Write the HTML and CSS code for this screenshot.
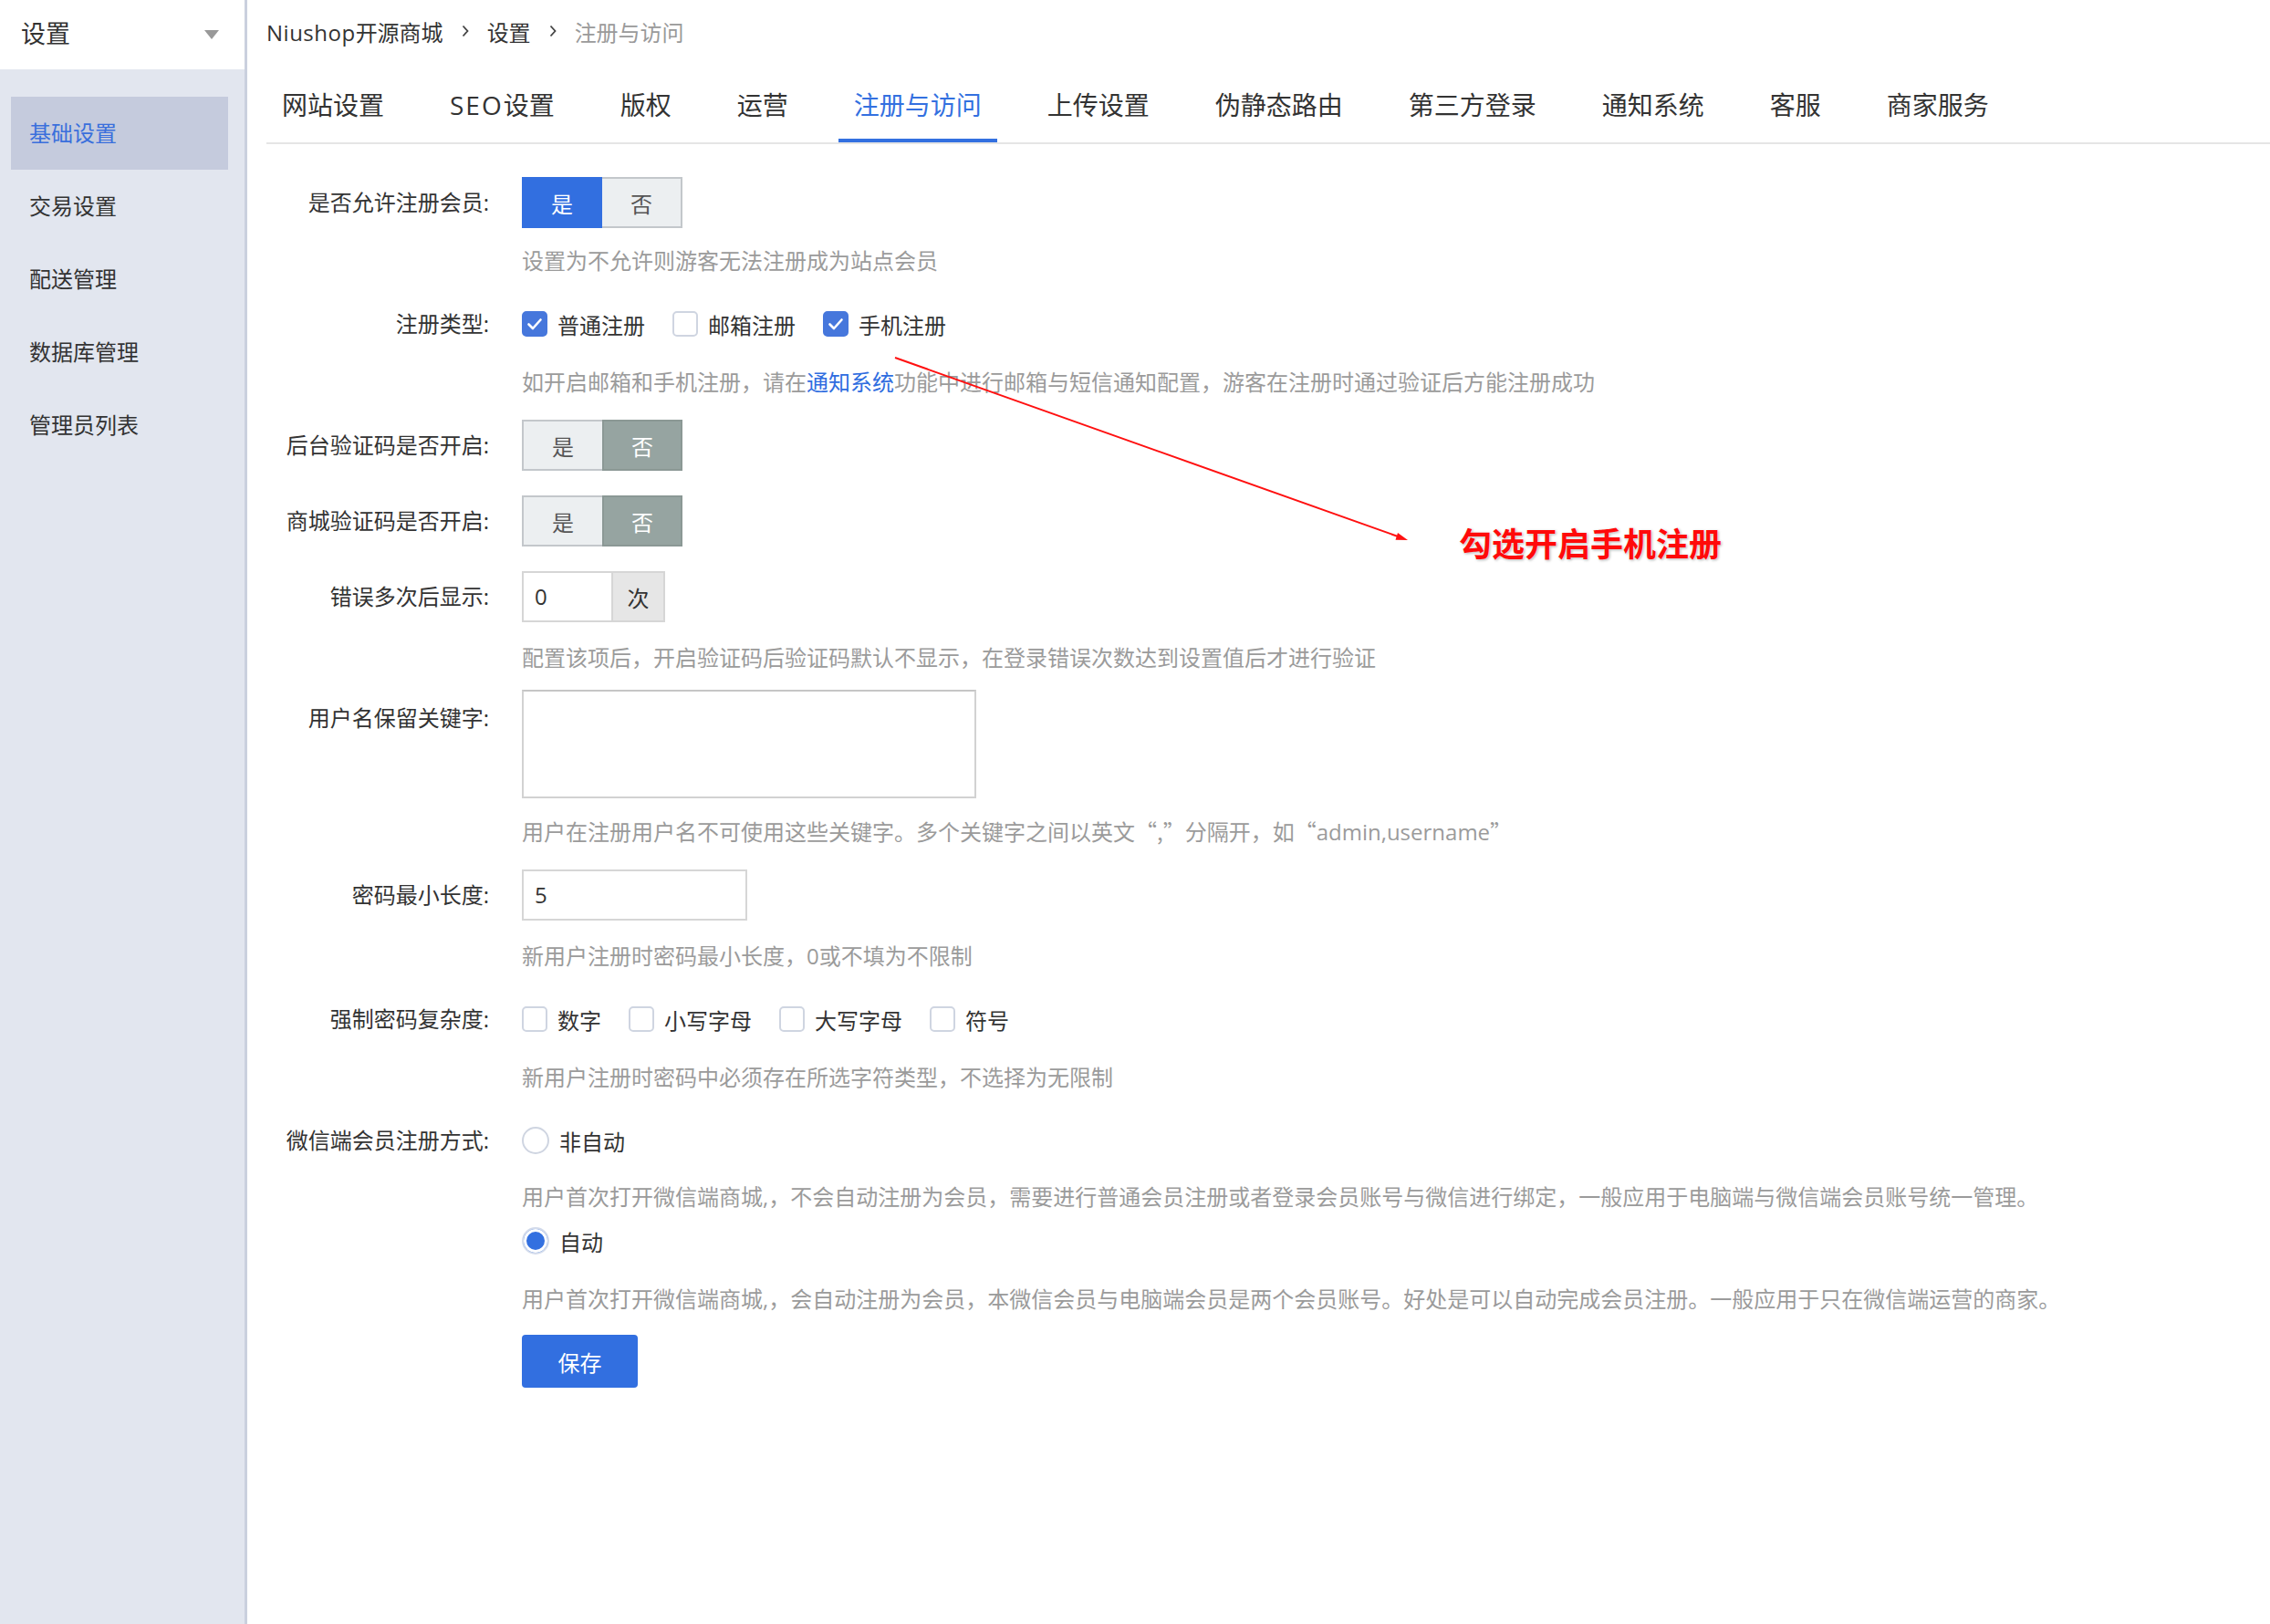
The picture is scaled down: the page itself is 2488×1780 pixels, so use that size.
FILE: index.html
```html
<!DOCTYPE html>
<html lang="zh-CN">
<head>
<meta charset="utf-8">
<title>注册与访问</title>
<link rel="stylesheet" href="styles.css">
</head>
<body>
<div class="page">
  <aside class="sidebar">
    <div class="side-head">
      <span class="side-title">设置</span>
      <span class="caret"></span>
    </div>
    <ul class="side-menu">
      <li class="side-item active">基础设置</li>
      <li class="side-item">交易设置</li>
      <li class="side-item">配送管理</li>
      <li class="side-item">数据库管理</li>
      <li class="side-item">管理员列表</li>
    </ul>
  </aside>

  <main class="main">
    <div class="crumbs">
      <span class="crumb"><span class="en">Niushop</span>开源商城</span>
      <svg class="sep" width="8" height="14" viewBox="0 0 8 14"><polyline points="1.5,1.5 6.5,7 1.5,12.5" fill="none" stroke="#444" stroke-width="1.8"/></svg>
      <span class="crumb">设置</span>
      <svg class="sep" width="8" height="14" viewBox="0 0 8 14"><polyline points="1.5,1.5 6.5,7 1.5,12.5" fill="none" stroke="#444" stroke-width="1.8"/></svg>
      <span class="crumb current">注册与访问</span>
    </div>

    <nav class="tabs">
      <span class="tab">网站设置</span>
      <span class="tab"><span class="en">SEO</span>设置</span>
      <span class="tab">版权</span>
      <span class="tab">运营</span>
      <span class="tab active">注册与访问</span>
      <span class="tab">上传设置</span>
      <span class="tab">伪静态路由</span>
      <span class="tab">第三方登录</span>
      <span class="tab">通知系统</span>
      <span class="tab">客服</span>
      <span class="tab">商家服务</span>
    </nav>

    <form class="form">
      <div class="row">
        <label class="label">是否允许注册会员:</label>
        <div class="field">
          <div class="toggle">
            <span class="seg on-blue">是</span>
            <span class="seg off right">否</span>
          </div>
          <p class="help">设置为不允许则游客无法注册成为站点会员</p>
        </div>
      </div>

      <div class="row">
        <label class="label">注册类型:</label>
        <div class="field">
          <div class="checks">
            <span class="check"><span class="box checked"><svg width="28" height="28" viewBox="0 0 28 28"><polyline points="7.5,14.5 12,19 20.5,9.5" fill="none" stroke="#fff" stroke-width="2.6" stroke-linecap="round" stroke-linejoin="round"/></svg></span><span class="check-text">普通注册</span></span>
            <span class="check"><span class="box"></span><span class="check-text">邮箱注册</span></span>
            <span class="check"><span class="box checked"><svg width="28" height="28" viewBox="0 0 28 28"><polyline points="7.5,14.5 12,19 20.5,9.5" fill="none" stroke="#fff" stroke-width="2.6" stroke-linecap="round" stroke-linejoin="round"/></svg></span><span class="check-text">手机注册</span></span>
          </div>
          <p class="help">如开启邮箱和手机注册，请在<a class="link">通知系统</a>功能中进行邮箱与短信通知配置，游客在注册时通过验证后方能注册成功</p>
        </div>
      </div>

      <div class="row">
        <label class="label">后台验证码是否开启:</label>
        <div class="field">
          <div class="toggle">
            <span class="seg off left">是</span>
            <span class="seg on-gray">否</span>
          </div>
        </div>
      </div>

      <div class="row">
        <label class="label">商城验证码是否开启:</label>
        <div class="field">
          <div class="toggle">
            <span class="seg off left">是</span>
            <span class="seg on-gray">否</span>
          </div>
        </div>
      </div>

      <div class="row row-close">
        <label class="label">错误多次后显示:</label>
        <div class="field">
          <div class="input-group">
            <span class="input-val">0</span>
            <span class="addon">次</span>
          </div>
          <p class="help help-low">配置该项后，开启验证码后验证码默认不显示，在登录错误次数达到设置值后才进行验证</p>
        </div>
      </div>

      <div class="row">
        <label class="label label-top">用户名保留关键字:</label>
        <div class="field">
          <div class="textarea"></div>
          <p class="help">用户在注册用户名不可使用这些关键字。多个关键字之间以英文<span class="cjk">“,”</span>分隔开，如<span class="cjk">“</span>admin,username<span class="cjk">”</span></p>
        </div>
      </div>

      <div class="row">
        <label class="label">密码最小长度:</label>
        <div class="field">
          <div class="input"><span class="input-val">5</span></div>
          <p class="help help-low">新用户注册时密码最小长度，0或不填为不限制</p>
        </div>
      </div>

      <div class="row">
        <label class="label">强制密码复杂度:</label>
        <div class="field">
          <div class="checks">
            <span class="check"><span class="box"></span><span class="check-text">数字</span></span>
            <span class="check"><span class="box"></span><span class="check-text">小写字母</span></span>
            <span class="check"><span class="box"></span><span class="check-text">大写字母</span></span>
            <span class="check"><span class="box"></span><span class="check-text">符号</span></span>
          </div>
          <p class="help">新用户注册时密码中必须存在所选字符类型，不选择为无限制</p>
        </div>
      </div>

      <div class="row row-close2">
        <label class="label">微信端会员注册方式:</label>
        <div class="field">
          <div class="radio-line"><span class="radio"></span><span class="check-text">非自动</span></div>
          <p class="help tight">用户首次打开微信端商城,，不会自动注册为会员，需要进行普通会员注册或者登录会员账号与微信进行绑定，一般应用于电脑端与微信端会员账号统一管理。</p>
          <div class="radio-line"><span class="radio selected"></span><span class="check-text">自动</span></div>
          <p class="help">用户首次打开微信端商城,，会自动注册为会员，本微信会员与电脑端会员是两个会员账号。好处是可以自动完成会员注册。一般应用于只在微信端运营的商家。</p>
        </div>
      </div>

      <div class="row">
        <span class="label"></span>
        <div class="field">
          <button type="button" class="btn">保存</button>
        </div>
      </div>
    </form>
  </main>

  <svg class="note-arrow" width="600" height="230" viewBox="0 0 600 230">
    <line x1="11" y1="12" x2="565" y2="209" stroke="#ff1010" stroke-width="2"/>
    <polygon points="573,212 559.5,211.8 562,204" fill="#ff1010"/>
  </svg>
  <div class="note-text">勾选开启手机注册</div>
</div>
</body>
</html>
```

FILE: styles.css
```css
* { box-sizing: border-box; }
html, body { margin: 0; padding: 0; }
body {
  font-family: "Open Sans", "Noto Sans CJK SC", sans-serif;
  color: #333;
  background: #fff;
}
.page {
  position: relative;
  display: flex;
  min-height: 1780px;
}
.cjk { font-family: "Noto Sans CJK SC", sans-serif; }

/* sidebar */
.sidebar {
  width: 271px;
  flex-shrink: 0;
  background: #e2e6ef;
  border-right: 3px solid #cad0de;
}
.side-head {
  height: 76px;
  background: #fff;
  display: flex;
  align-items: center;
  justify-content: space-between;
  padding: 0 28px 5px 23px;
}
.side-title { font-size: 27px; color: #333; }
.caret {
  width: 0; height: 0;
  margin-top: 4px;
  border-left: 8px solid transparent;
  border-right: 8px solid transparent;
  border-top: 10px solid #999;
}
.side-menu { list-style: none; margin: 0; padding: 30px 0 0; }
.side-item {
  height: 80px;
  line-height: 80px;
  margin: 0 18px 0 12px;
  padding-left: 20px;
  font-size: 24px;
  color: #333;
}
.side-item.active { background: #c5cbdd; color: #3a6fdc; }

/* main */
.main { flex: 1; padding-left: 21px; min-width: 0; }
.crumbs {
  height: 74px;
  display: flex;
  align-items: center;
  padding-bottom: 6px;
  font-size: 24px;
}
.crumbs .en { letter-spacing: 0.5px; }
.crumb { color: #333; }
.crumb.current { color: #9a9a9a; }
.sep { margin: 0 20px; }

.tabs {
  display: flex;
  border-bottom: 2px solid #e5e5e5;
}
.tab {
  padding: 4px 17px 0;
  margin-right: 38px;
  line-height: 74px;
  font-size: 28px;
  color: #333;
  border-bottom: 4px solid transparent;
  white-space: nowrap;
}
.tab .en { letter-spacing: 2px; }
.tab.active { color: #3370e0; border-bottom-color: #3370e0; }

/* form */
.form { padding-top: 36px; }
.row { display: flex; align-items: flex-start; margin-bottom: 27px; }
.row.row-close { margin-bottom: 21px; }
.row.row-close2 { margin-bottom: 25px; }
.label {
  width: 244px;
  margin-right: 36px;
  flex-shrink: 0;
  text-align: right;
  font-size: 24px;
  line-height: 56px;
  color: #333;
}
.label.label-top { line-height: 62px; }
.field { display: flex; flex-direction: column; align-items: flex-start; }
.help {
  margin: 22px 0 0;
  font-size: 24px;
  line-height: 28px;
  color: #9b9b9b;
  white-space: nowrap;
}
.help.help-low { margin-top: 25px; }
.help.tight { margin-bottom: 6px; margin-top: 20px; }
.link { color: #2f6de0; }

.toggle { display: flex; height: 56px; }
.seg {
  width: 88px;
  height: 56px;
  display: flex;
  align-items: center;
  justify-content: center;
  font-size: 24px;
}
.seg.on-blue { background: #326fe0; color: #fff; }
.seg.off { background: #eceff1; color: #555; border: 2px solid #c3c7cb; }
.seg.off.right { border-left: none; }
.seg.off.left { border-right: none; }
.seg.on-gray { background: #96a4a1; color: #fff; border: 2px solid #8b9895; }

.checks { display: flex; align-items: center; height: 56px; }
.check { display: flex; align-items: center; margin-right: 30px; }
.box {
  width: 28px;
  height: 28px;
  border-radius: 5px;
  border: 2px solid #cfd5e1;
  background: #fff;
  display: flex;
}
.box.checked { background: #4677dc; border-color: #4677dc; }
.box svg { margin: -2px; }
.check-text { margin-left: 11px; font-size: 24px; color: #333; }

.input-group {
  display: flex;
  height: 56px;
  border: 2px solid #d6d6d6;
}
.input-group .input-val { width: 96px; }
.input-val {
  display: block;
  padding-left: 12px;
  font-size: 24px;
  line-height: 52px;
  color: #333;
}
.addon {
  width: 57px;
  background: #e6e6e6;
  border-left: 2px solid #d6d6d6;
  display: flex;
  align-items: center;
  justify-content: center;
  font-size: 24px;
  color: #333;
}
.input {
  width: 247px;
  height: 56px;
  border: 2px solid #d6d6d6;
}
.textarea {
  width: 498px;
  height: 119px;
  border: 2px solid #d2d2d2;
  border-top-color: #c6c6c6;
  background: #fff;
}

.radio-line { display: flex; align-items: center; height: 56px; }
.radio {
  width: 30px;
  height: 30px;
  border-radius: 50%;
  border: 2px solid #cfd5e1;
  background: #fff;
}
.radio.selected {
  border-color: #d3dbeb;
  background: #3370e0;
  box-shadow: inset 0 0 0 3px #fff;
}

.btn {
  width: 127px;
  height: 58px;
  border: none;
  border-radius: 4px;
  background: #326fe0;
  color: #fff;
  font-family: inherit;
  font-size: 24px;
  padding: 0;
}

/* annotation overlay */
.note-arrow { position: absolute; left: 970px; top: 380px; }
.note-text {
  position: absolute;
  left: 1599px;
  top: 568px;
  font-size: 36px;
  line-height: 52px;
  font-weight: 700;
  color: #ff0a0a;
  font-family: "Noto Sans CJK SC", sans-serif;
  text-shadow: 0 0 2px #fff, 1px 1px 3px rgba(0,0,0,0.35);
}
```
